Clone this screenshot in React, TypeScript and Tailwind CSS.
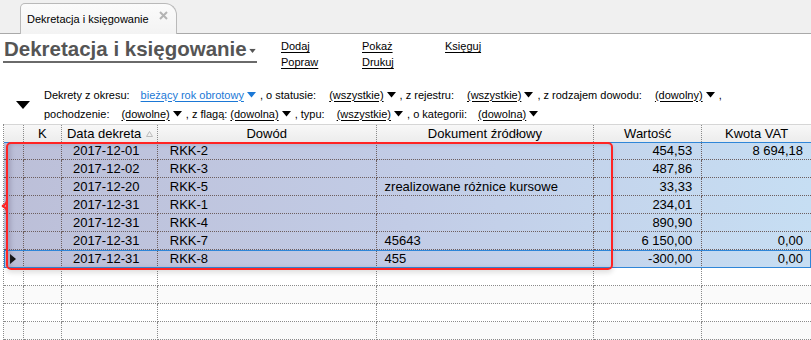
import React from "react";

const cols = [20, 38, 96, 219, 218, 108, 109];

type Rec = { date: string; doc: string; src: string; val: string; vat: string };

const records: Rec[] = [
  { date: "2017-12-01", doc: "RKK-2", src: "", val: "454,53", vat: "8 694,18" },
  { date: "2017-12-02", doc: "RKK-3", src: "", val: "487,86", vat: "" },
  { date: "2017-12-20", doc: "RKK-5", src: "zrealizowane różnice kursowe", val: "33,33", vat: "" },
  { date: "2017-12-31", doc: "RKK-1", src: "", val: "234,01", vat: "" },
  { date: "2017-12-31", doc: "RKK-4", src: "", val: "890,90", vat: "" },
  { date: "2017-12-31", doc: "RKK-7", src: "45643", val: "6 150,00", vat: "0,00" },
  { date: "2017-12-31", doc: "RKK-8", src: "455", val: "-300,00", vat: "0,00" },
];

function Caret({ className = "" }: { className?: string }) {
  return (
    <svg width="9" height="6" viewBox="0 0 9 6" className={className}>
      <path d="M0 0 H9 L4.5 5.5 Z" fill="currentColor" />
    </svg>
  );
}

function Pick({ label, blue }: { label: string; blue?: boolean }) {
  return (
    <span
      className={`inline-flex items-center gap-[3px] underline underline-offset-2 ${
        blue ? "text-[#1b78d6] decoration-[#1b78d6]" : "text-black"
      }`}
    >
      {label}
      <Caret className={blue ? "text-[#1b78d6]" : "text-black"} />
    </span>
  );
}

function DataRow({ r, current, first }: { r: Rec; current?: boolean; first?: boolean }) {
  return (
    <div
      className={`flex h-[18px] bg-gradient-to-r from-[#bcbfd8] via-[#c2cce6] to-[#c6def3] ${
        current ? "outline outline-1 -outline-offset-1 outline-[#2f86d8]" : ""
      } ${first ? "border-t border-[#2f86d8]" : ""}`}
    >
      <div
        style={{ width: cols[0] }}
        className="flex items-center justify-center border-r border-b border-dotted border-[#6d5f5f]"
      >
        {current && (
          <svg width="6" height="10" viewBox="0 0 6 10">
            <path d="M0 0 L6 5 L0 10 Z" fill="#111" />
          </svg>
        )}
      </div>
      <div style={{ width: cols[1] }} className="border-r border-b border-dotted border-[#6d5f5f]" />
      <div style={{ width: cols[2] }} className="flex items-center pl-[11px] border-r border-b border-dotted border-[#6d5f5f]">
        {r.date}
      </div>
      <div style={{ width: cols[3] }} className="flex items-center pl-[12px] border-r border-b border-dotted border-[#6d5f5f]">
        {r.doc}
      </div>
      <div style={{ width: cols[4] }} className="flex items-center pl-[8px] border-r border-b border-dotted border-[#6d5f5f]">
        {r.src}
      </div>
      <div style={{ width: cols[5] }} className="flex items-center justify-end pr-[9px] border-r border-b border-dotted border-[#6d5f5f]">
        {r.val}
      </div>
      <div style={{ width: cols[6] }} className="flex items-center justify-end pr-[8px] border-b border-dotted border-[#6d5f5f]">
        {r.vat}
      </div>
    </div>
  );
}

function EmptyRow({ shade }: { shade?: boolean }) {
  return (
    <div className={`flex h-[18px] ${shade ? "bg-[#fafafa]" : "bg-white"}`}>
      {cols.map((w, i) => (
        <div
          key={i}
          style={{ width: w }}
          className={`border-b border-dotted border-[#8a8a8a] ${i < cols.length - 1 ? "border-r" : ""}`}
        />
      ))}
    </div>
  );
}

export default function App() {
  return (
    <div className="w-[811px] h-[340px] overflow-hidden bg-white font-['Liberation_Sans',Arial,sans-serif] text-black">
      {/* Tab strip */}
      <div className="h-[34px] bg-[#f0f0f0] flex items-end border-b border-[#a9a9a9]">
        <div className="ml-[20px] -mb-px w-[157px] h-[31px] flex items-center justify-between pl-[6px] pr-[8px] bg-gradient-to-b from-[#fbfbfb] to-[#f3f3f3] border border-b-0 border-[#b9b9b9] rounded-tl-[5px] rounded-tr-[12px]">
          <span className="text-[11px] mt-[1px]">Dekretacja i księgowanie</span>
          <svg width="9" height="9" viewBox="0 0 9 9" className="mb-[8px]">
            <path d="M1 1 L8 8 M8 1 L1 8" stroke="#b4b4b4" strokeWidth="2" />
          </svg>
        </div>
      </div>

      {/* Title and actions */}
      <div className="flex pt-[3px] h-[52px]">
        <div className="ml-[3px] w-[254px] shrink-0 h-[26px] flex items-center border-b-2 border-[#6a6a6a] whitespace-nowrap">
          <span className="ml-[1px] text-[20.5px] font-bold text-[#555555] leading-none">
            Dekretacja i księgowanie
          </span>
          <Caret className="ml-[1px] mt-[3px] text-[#555555] scale-75" />
        </div>
        <div className="ml-[24px] flex flex-col gap-[3px] text-[11px] leading-[13px] pt-[3px] w-[81px]">
          <span className="underline underline-offset-2">Dodaj</span>
          <span className="underline underline-offset-2">Popraw</span>
        </div>
        <div className="flex flex-col gap-[3px] text-[11px] leading-[13px] pt-[3px] w-[83px]">
          <span className="underline underline-offset-2">Pokaż</span>
          <span className="underline underline-offset-2">Drukuj</span>
        </div>
        <div className="flex flex-col text-[11px] leading-[13px] pt-[3px]">
          <span className="underline underline-offset-2">Księguj</span>
        </div>
      </div>

      {/* Filters */}
      <div className="flex h-[38px] text-[11px] pt-[2px]">
        <div className="w-[44px] flex items-center justify-center pl-[2px] pb-[2px]">
          <svg width="14" height="8" viewBox="0 0 14 8">
            <path d="M0 0 H14 L7 8 Z" fill="#000" />
          </svg>
        </div>
        <div className="flex flex-col gap-[5px]">
          <div className="flex items-center h-[14px]">
            <span className="mr-[11px]">Dekrety z okresu:</span>
            <Pick label="bieżący rok obrotowy" blue />
            <span className="ml-[4px] mr-[13px]">, o statusie:</span>
            <Pick label="(wszystkie)" />
            <span className="ml-[4px] mr-[13px]">, z rejestru:</span>
            <Pick label="(wszystkie)" />
            <span className="ml-[4px] mr-[13px]">, z rodzajem dowodu:</span>
            <Pick label="(dowolny)" />
            <span className="ml-[4px]">,</span>
          </div>
          <div className="flex items-center h-[14px]">
            <span className="mr-[12px]">pochodzenie:</span>
            <Pick label="(dowolne)" />
            <span className="ml-[4px] mr-[3px]">, z flagą:</span>
            <Pick label="(dowolna)" />
            <span className="ml-[4px] mr-[12px]">, typu:</span>
            <Pick label="(wszystkie)" />
            <span className="ml-[4px] mr-[11px]">, o kategorii:</span>
            <Pick label="(dowolna)" />
          </div>
        </div>
      </div>

      {/* Grid */}
      <div className="relative ml-[3px] text-[13px] border-l border-dotted border-[#8a8a8a]">
        <div className="flex h-[18px] bg-gradient-to-b from-[#f8f8f8] to-[#ececec] border-t border-[#d6d6d6] text-[13px]">
          <div style={{ width: cols[0] }} className="border-r border-dotted border-[#8a8a8a]" />
          <div style={{ width: cols[1] }} className="flex items-center justify-center border-r border-dotted border-[#8a8a8a]">
            K
          </div>
          <div style={{ width: cols[2] }} className="flex items-center pl-[5px] border-r border-dotted border-[#8a8a8a]">
            Data dekreta
            <svg width="7" height="6" viewBox="0 0 7 6" className="ml-[5px]">
              <path d="M0.5 5.5 L3.5 0.5 L6.5 5.5 Z" fill="none" stroke="#bbb" />
            </svg>
          </div>
          <div style={{ width: cols[3] }} className="flex items-center justify-center border-r border-dotted border-[#8a8a8a]">
            Dowód
          </div>
          <div style={{ width: cols[4] }} className="flex items-center justify-center border-r border-dotted border-[#8a8a8a]">
            Dokument źródłowy
          </div>
          <div style={{ width: cols[5] }} className="flex items-center justify-center border-r border-dotted border-[#8a8a8a]">
            Wartość
          </div>
          <div style={{ width: cols[6] }} className="flex items-center justify-center">
            Kwota VAT
          </div>
        </div>

        {records.map((r, i) => (
          <DataRow key={i} r={r} first={i === 0} current={i === records.length - 1} />
        ))}
        <EmptyRow />
        <EmptyRow shade />
        <EmptyRow />
        <EmptyRow shade />

        {/* Red marker around selected records */}
        <div className="pointer-events-none absolute left-[2px] top-[18px] w-[607px] h-[128px] rounded-[5px] border-2 border-[#ff2424] shadow-[inset_3px_0_4px_rgba(90,80,110,0.25),0_3px_5px_rgba(0,0,0,0.12)]" />
        <svg
          className="pointer-events-none absolute left-[-3px] top-[75px]"
          width="7"
          height="14"
          viewBox="0 0 7 14"
        >
          <path d="M6 0 Q6 6 1 7 Q6 8 6 14" fill="none" stroke="#ff2424" strokeWidth="2" />
        </svg>
      </div>
    </div>
  );
}
